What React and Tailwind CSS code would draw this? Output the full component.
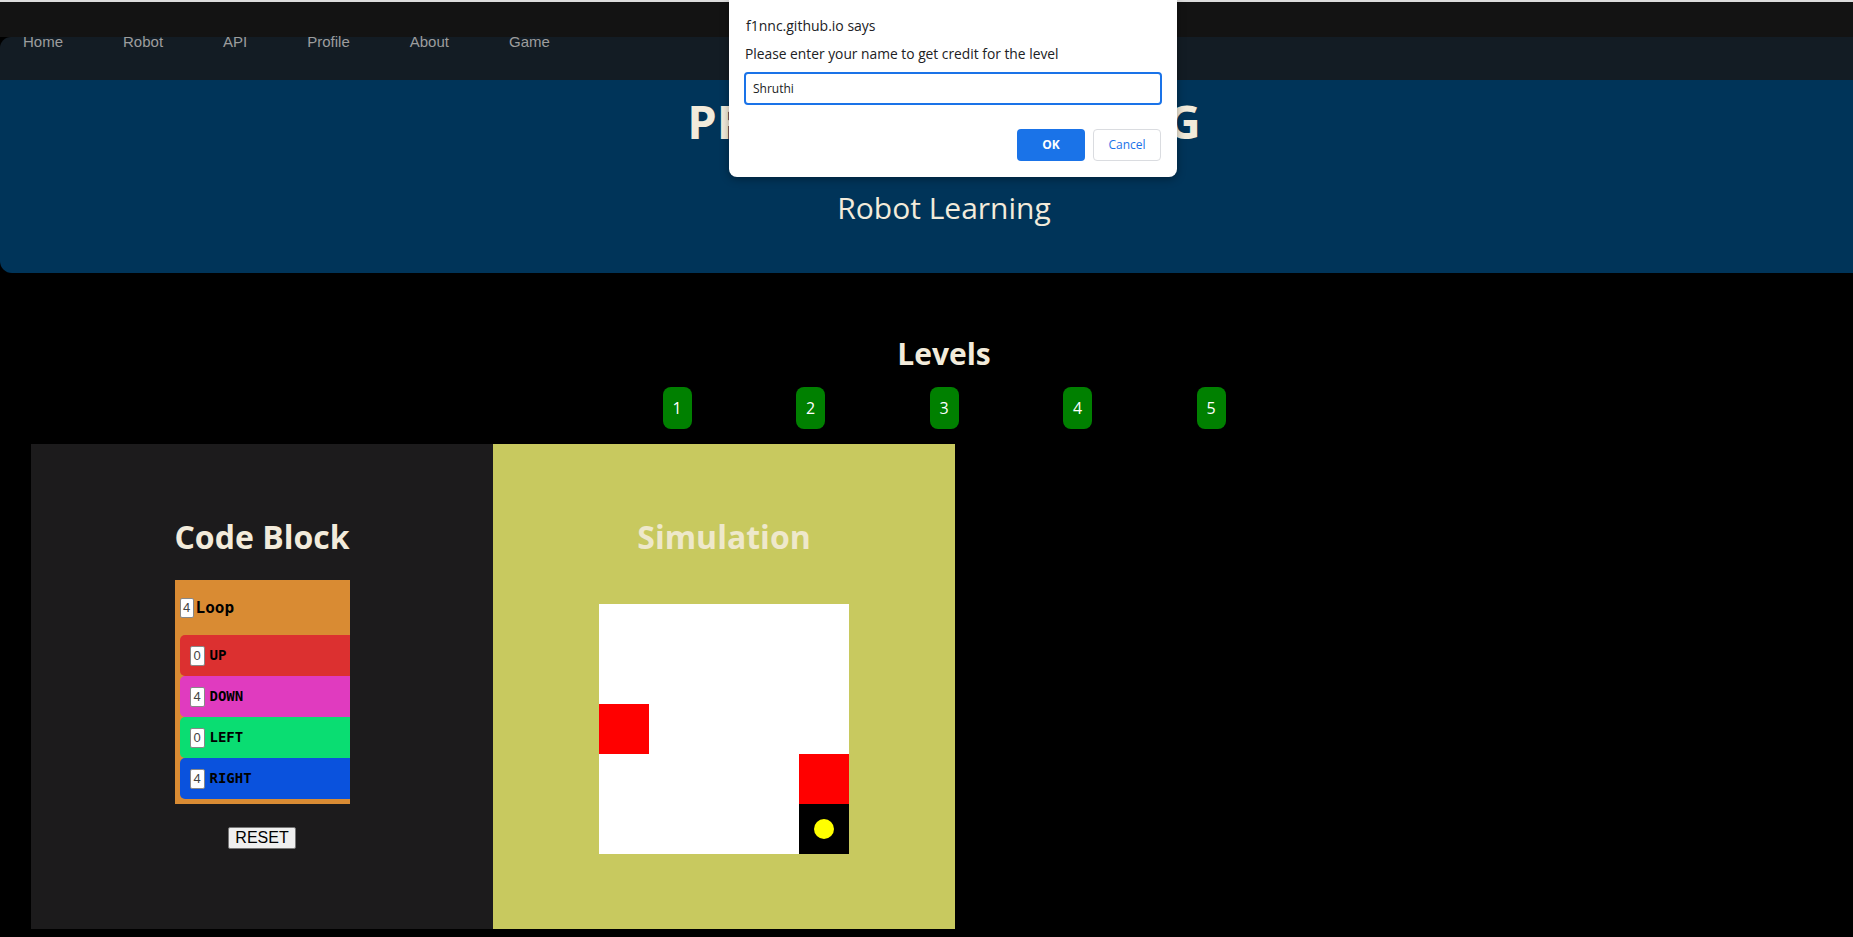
import React from "react";

const navLinks = ["Home", "Robot", "API", "Profile", "About", "Game"];

// command rows inside the loop block
const commands = [
  { label: "UP", value: 0, color: "bg-[#dc3030]" },
  { label: "DOWN", value: 4, color: "bg-[#e03bbf]" },
  { label: "LEFT", value: 0, color: "bg-[#0add72]" },
  { label: "RIGHT", value: 4, color: "bg-[#0a52dd]" },
];

// 5x5 board: 0 empty, 1 wall, 2 robot
const board = [
  [0, 0, 0, 0, 0],
  [0, 0, 0, 0, 0],
  [1, 0, 0, 0, 0],
  [0, 0, 0, 0, 1],
  [0, 0, 0, 0, 2],
];

const PromptDialog = () => (
  <div className="absolute left-[729px] top-0 w-[448px] h-[177px] bg-white rounded-b-[8px] shadow-[0_2px_8px_rgba(0,0,0,0.35)] font-['Open_Sans',sans-serif] z-10">
    <div className="pt-[15px] pl-[17px] text-[14px] leading-[22px] text-[#202124]">f1nnc.github.io says</div>
    <div className="pt-[8px] pl-[16px] text-[13.8px] leading-[18px] text-[#202124]">
      Please enter your name to get credit for the level
    </div>
    <div className="mt-[9px] ml-[15px] w-[418px] h-[33px] border-2 border-[#1a73e8] rounded-[4px] flex items-center pl-[7px] text-[12px] text-[#202124]">
      Shruthi
    </div>
    <div className="mt-[24px] pr-[16px] flex justify-end gap-[8px]">
      <button className="w-[68px] h-[32px] rounded-[4px] bg-[#1a73e8] text-white text-[12px] font-bold">OK</button>
      <button className="w-[68px] h-[32px] rounded-[4px] border border-[#dadce0] bg-white text-[#1a73e8] text-[12px]">Cancel</button>
    </div>
  </div>
);

const CodeBlock = () => (
  <div className="w-[462px] h-[485px] bg-[#1c1b1c] flex flex-col items-center">
    <h2 className="mt-[75px] text-[32px] leading-[36px] font-bold text-[#f2ebdb]">Code Block</h2>
    <div className="mt-[25px] w-[175px] bg-[#d98b33] pl-[5px] pb-[5px] overflow-hidden">
      <div className="h-[55px] flex items-center">
        <div className="w-[14px] h-[20px] bg-white border border-[#888] rounded-[2px] flex items-center justify-center text-[13px] text-[#444] font-['Liberation_Sans',sans-serif]">4</div>
        <span className="ml-[2px] text-[16px] font-bold text-black font-['DejaVu_Sans_Mono',monospace]">Loop</span>
      </div>
      {commands.map((c) => (
        <div key={c.label} className={`h-[41px] w-[170px] ${c.color} rounded-l-[5px] flex items-center pl-[10px]`}>
          <div className="w-[15px] h-[20px] bg-white border border-[#888] rounded-[2px] flex items-center justify-center text-[13px] text-[#444] font-['Liberation_Sans',sans-serif]">
            {c.value}
          </div>
          <span className="ml-[5px] text-[14px] font-bold text-black font-['DejaVu_Sans_Mono',monospace]">{c.label}</span>
        </div>
      ))}
    </div>
    <button className="mt-[23px] h-[22px] px-[6px] bg-[#efefef] border border-[#767676] rounded-[2px] text-[16px] leading-[18px] text-black font-['Liberation_Sans',sans-serif]">
      RESET
    </button>
  </div>
);

const Simulation = () => (
  <div className="w-[462px] h-[485px] bg-[#c8c95f] flex flex-col items-center">
    <h2 className="mt-[75px] text-[32px] leading-[36px] font-bold text-[#eee8cb]">Simulation</h2>
    <div className="mt-[49px] grid grid-cols-[repeat(5,50px)] grid-rows-[repeat(5,50px)] bg-white">
      {board.flat().map((cell, i) => (
        <div
          key={i}
          className={
            cell === 1
              ? "bg-[#ff0000]"
              : cell === 2
              ? "bg-black flex items-center justify-center"
              : "bg-white"
          }
        >
          {cell === 2 && <div className="w-[20px] h-[20px] rounded-full bg-[#ffff00]" />}
        </div>
      ))}
    </div>
  </div>
);

export default function App() {
  return (
    <div className="relative w-[1853px] h-[937px] overflow-hidden bg-black font-['Open_Sans',sans-serif]">
      <div className="w-[1888px]">
        <div className="h-[2px] bg-[#dcdcdc]" />
        <div className="h-[35px] bg-[#131313]" />

        {/* Nav */}
        <nav className="h-[43px] bg-[#131c24] rounded-tl-[11px] flex items-start gap-[60px] pl-[23px]">
          {navLinks.map((l) => (
            <a key={l} className="relative -top-[5px] text-[15px] leading-[20px] text-[#9d9d9d] font-['Liberation_Sans',sans-serif]">
              {l}
            </a>
          ))}
        </nav>
        {/* Header */}
        <header className="h-[193px] bg-[#003459] rounded-bl-[12px] flex flex-col items-center">
          <h1 className="mt-[11px] text-[47px] leading-[60px] font-bold text-[#f2ebdb]">PROGRAMMING BLOG</h1>
          <p className="mt-[37px] text-[30px] leading-[40px] text-[#f2ebdb]">Robot Learning</p>
        </header>

        {/* Levels */}
        <div className="flex flex-col items-center mt-[61px]">
          <h2 className="text-[30px] leading-[40px] font-bold text-[#f2ebdb]">Levels</h2>
          <div className="mt-[13px] flex gap-[104.5px]">
            {[1, 2, 3, 4, 5].map((n) => (
              <button key={n} className="w-[29px] h-[42px] rounded-[8px] bg-[#008000] text-white text-[16px]">
                {n}
              </button>
            ))}
          </div>
        </div>

        {/* Workspace */}
        <div className="mt-[15px] ml-[31px] flex">
          <CodeBlock />
          <Simulation />
        </div>
      </div>

      <PromptDialog />
    </div>
  );
}
